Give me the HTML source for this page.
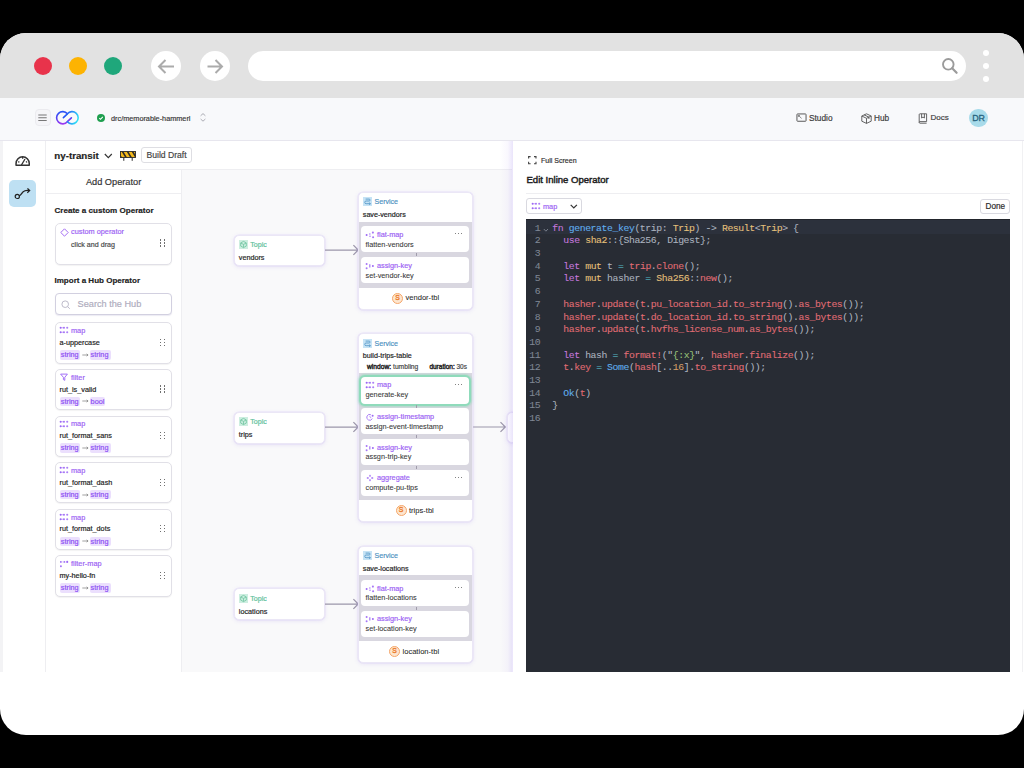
<!DOCTYPE html>
<html><head><meta charset="utf-8">
<style>
*{box-sizing:border-box;margin:0;padding:0}
html,body{width:1024px;height:768px;overflow:hidden;background:#000}
body{font-family:"Liberation Sans",sans-serif;position:relative;color:#222}
.a{position:absolute}
#frame{position:absolute;left:0;top:0;width:1024px;height:768px;background:#fff;clip-path:inset(33px 0 33px 0 round 26px);overflow:hidden}
.t{position:absolute;white-space:nowrap;line-height:1;-webkit-text-stroke:0.18px currentColor}
.code{position:absolute;font-family:"Liberation Mono",monospace;white-space:pre;color:#abb2bf;-webkit-text-stroke:0.08px currentColor}
</style></head><body>
<div id="frame">
<div class="a" style="left:0;top:33px;width:1024px;height:65px;background:#e2e2e2"></div>
<div class="a" style="left:34.00px;top:57.00px;width:18.00px;height:18.00px;border-radius:50%;background:#e8334b"></div>
<div class="a" style="left:69.00px;top:57.00px;width:18.00px;height:18.00px;border-radius:50%;background:#fdb302"></div>
<div class="a" style="left:104.00px;top:57.00px;width:18.00px;height:18.00px;border-radius:50%;background:#1fa77b"></div>
<div class="a" style="left:151.00px;top:51.00px;width:30.00px;height:30.00px;border-radius:50%;background:#fff"></div>
<div class="a" style="left:199.50px;top:51.00px;width:30.00px;height:30.00px;border-radius:50%;background:#fff"></div>
<svg class="a" style="left:151px;top:51px;overflow:visible" width="30" height="30" viewBox="0 0 30 30"><path d="M23 15.5H8.5M14.5 9L8 15.5L14.5 22" fill="none" stroke="#ababab" stroke-width="2"/></svg>
<svg class="a" style="left:199.5px;top:51px;overflow:visible" width="30" height="30" viewBox="0 0 30 30"><path d="M7.5 15.5H22M15.5 9L22 15.5L15.5 22" fill="none" stroke="#ababab" stroke-width="2"/></svg>
<div class="a" style="left:248.00px;top:51.00px;width:718.00px;height:30.00px;border-radius:15px;background:#fff"></div>
<svg class="a" style="left:940px;top:56px;overflow:visible" width="20" height="20" viewBox="0 0 20 20"><circle cx="8.3" cy="8.3" r="5.3" fill="none" stroke="#9b9b9b" stroke-width="1.9"/><path d="M12.2 12.2L16.6 16.8" stroke="#9b9b9b" stroke-width="2.2" stroke-linecap="round"/></svg>
<div class="a" style="left:983.00px;top:50.00px;width:6.00px;height:6.00px;border-radius:50%;background:#fff"></div>
<div class="a" style="left:983.00px;top:63.00px;width:6.00px;height:6.00px;border-radius:50%;background:#fff"></div>
<div class="a" style="left:983.00px;top:76.00px;width:6.00px;height:6.00px;border-radius:50%;background:#fff"></div>
<div class="a" style="left:0.00px;top:98.00px;width:1024.00px;height:43.00px;background:#f8f9fb;border-bottom:1px solid #e7e6ee"></div>
<div class="a" style="left:34.50px;top:109.30px;width:16.10px;height:16.90px;border:1px solid #ebebef;border-radius:4px;background:#f5f5f8"></div>
<svg class="a" style="left:38px;top:113px;overflow:visible" width="9" height="9" viewBox="0 0 9 9"><path d="M0.3 2H8.7M0.3 4.75H8.7M0.3 7.5H8.7" stroke="#777" stroke-width="1.05"/></svg>
<svg class="a" style="left:54px;top:109px" width="28" height="18" viewBox="54 109 28 18">
<defs><linearGradient id="lg" x1="62" y1="111" x2="63" y2="124.5" gradientUnits="userSpaceOnUse">
<stop offset="0" stop-color="#2455f6"/><stop offset="0.55" stop-color="#5a3ff2"/><stop offset="1" stop-color="#a43cf1"/></linearGradient>
<linearGradient id="lg2" x1="66" y1="113" x2="79" y2="118" gradientUnits="userSpaceOnUse"><stop offset="0" stop-color="#2453f6"/><stop offset="1" stop-color="#30e6f6"/></linearGradient></defs>
<path d="M67.37 113.83A6.1 6.1 0 1 0 67.37 121.67L71.4 117.9" fill="none" stroke="url(#lg)" stroke-width="1.6" stroke-linecap="round" stroke-linejoin="round"/>
<path d="M63.4 117.6L67.43 113.83A6.1 6.1 0 1 1 67.43 121.67" fill="none" stroke="url(#lg2)" stroke-width="1.6" stroke-linecap="round" stroke-linejoin="round"/>
</svg>
<div class="a" style="left:96.50px;top:114.00px;width:8.00px;height:8.00px;border-radius:50%;background:#1f9f4f"></div>
<svg class="a" style="left:96.5px;top:114px;overflow:visible" width="8" height="8" viewBox="0 0 8 8"><path d="M2.3 4.1L3.5 5.3L5.8 2.9" fill="none" stroke="#fff" stroke-width="1.1"/></svg>
<div class="t" style="left:111.00px;top:114.95px;font-size:7.3px;color:#3a3a3a;font-weight:400;">drc/memorable-hammerl</div>
<svg class="a" style="left:200.4px;top:113.3px;overflow:visible" width="6" height="9" viewBox="0 0 6 9"><path d="M0.6 2.8L3 0.6L5.4 2.8M0.6 6L3 8.2L5.4 6" fill="none" stroke="#a3a3ab" stroke-width="0.9"/></svg>
<svg class="a" style="left:795.6px;top:113.3px;overflow:visible" width="11" height="9" viewBox="0 0 11 9"><rect x="0.95" y="0.95" width="9.1" height="7.3" rx="0.6" fill="none" stroke="#5a5a5a" stroke-width="1"/><path d="M2.4 2.4L5.6 5.4M2.4 2.4V4M2.4 2.4H4" stroke="#777" stroke-width="0.85" fill="none"/></svg>
<div class="t" style="left:809.00px;top:113.85px;font-size:8.3px;color:#3c3c3c;font-weight:400;">Studio</div>
<svg class="a" style="left:860.5px;top:112.5px;overflow:visible" width="11" height="11" viewBox="0 0 11 11"><path d="M5.5 0.8L10.2 3V8.2L5.5 10.4L0.8 8.2V3Z M0.8 3L5.5 5.3L10.2 3 M5.5 5.3V10.4 M3.1 1.9L7.9 4.1V6" fill="none" stroke="#555" stroke-width="0.9"/></svg>
<div class="t" style="left:874.00px;top:115.08px;font-size:8.25px;color:#3c3c3c;font-weight:400;">Hub</div>
<svg class="a" style="left:918px;top:112.5px;overflow:visible" width="10" height="11" viewBox="0 0 10 11"><path d="M1.2 9.4V1.6A0.8 0.8 0 0 1 2 0.8H8.6V8.6H2A0.8 0.8 0 0 0 1.2 9.4A0.8 0.8 0 0 0 2 10.2H8.6M3.6 0.8V5L5 4L6.4 5V0.8" fill="none" stroke="#555" stroke-width="0.9"/></svg>
<div class="t" style="left:930.50px;top:113.98px;font-size:8.03px;color:#3c3c3c;font-weight:400;">Docs</div>
<div class="a" style="left:969.40px;top:108.50px;width:18.60px;height:18.60px;border-radius:50%;background:#a8dbea"></div>
<div class="t" style="left:972.20px;top:113.55px;font-size:8.9px;color:#27637e;font-weight:400;-webkit-text-stroke:0.3px #27637e">DR</div>
<div class="a" style="left:0.00px;top:141.00px;width:46.00px;height:531.00px;background:#fff;border-right:1px solid #eeeef1"></div>
<div class="a" style="left:0.00px;top:141.00px;width:2.50px;height:531.00px;background:#f3f3f5"></div>
<div class="a" style="left:46.00px;top:141.00px;width:466.00px;height:29.00px;background:#fff;border-bottom:1px solid #eeeef1"></div>
<div class="a" style="left:46.00px;top:170.00px;width:136.00px;height:502.00px;background:#fff;border-right:1px solid #eeeef1"></div>
<div class="a" style="left:46.00px;top:193.00px;width:135.00px;height:1.00px;background:#eeeef1"></div>
<div class="a" style="left:182.00px;top:170.00px;width:330.00px;height:502.00px;background:#f9f9fa"></div>
<svg class="a" style="left:14px;top:154px;overflow:visible" width="17" height="13" viewBox="0 0 17 13"><path d="M2.05 11.15V9.45A6.6 6.6 0 0 1 15.25 9.45V11.15Z" fill="none" stroke="#333" stroke-width="1.5" stroke-linejoin="round"/><path d="M7.4 11.2L11 5M8.65 3.1V4.8M4.2 7.6L5.4 8.3M13.1 7.6L11.9 8.3" stroke="#333" stroke-width="1.3" fill="none"/></svg>
<div class="a" style="left:9.20px;top:179.80px;width:26.80px;height:27.00px;border-radius:5px;background:#bee0f3"></div>
<svg class="a" style="left:14px;top:186px;overflow:visible" width="17" height="14" viewBox="0 0 17 14"><circle cx="3.3" cy="10.4" r="2.1" fill="none" stroke="#222" stroke-width="1.2"/><path d="M5.3 9.8C7 9 7.5 7.5 8.5 6.5C9.5 5.3 10 5.5 11 4.8C12.5 4 14 4.3 15.5 4.4M13.5 2.3L15.7 4.5L13.3 6.7" fill="none" stroke="#222" stroke-width="1.2"/></svg>
<div class="t" style="left:54.30px;top:150.73px;font-size:9.74px;color:#222;font-weight:700;">ny-transit</div>
<svg class="a" style="left:104px;top:152.6px;overflow:visible" width="9" height="6" viewBox="0 0 9 6"><path d="M0.8 1L4.3 4.6L7.8 1" fill="none" stroke="#333" stroke-width="1.15"/></svg>
<svg class="a" style="left:120px;top:151px" width="16" height="10" viewBox="0 0 16 10">
<defs><clipPath id="bc"><rect x="0.5" y="0.5" width="15" height="6"/></clipPath></defs>
<rect x="0.5" y="0.5" width="15" height="6" fill="#f3b81a"/>
<g clip-path="url(#bc)" stroke="#2b2b2b" stroke-width="1.6"><path d="M1 -2L7 8M6 -2L12 8M11 -2L17 8M-4 -2L2 8"/></g>
<rect x="0.5" y="0.5" width="15" height="6" fill="none" stroke="#2b2b2b" stroke-width="0.9"/>
<path d="M3.8 6.5V9.8M12.2 6.5V9.8" stroke="#2b2b2b" stroke-width="1"/></svg>
<div class="a" style="left:141.20px;top:147.30px;width:50.50px;height:15.80px;border:1px solid #dedee3;border-radius:3px;background:#fff"></div>
<div class="t" style="left:146.50px;top:150.90px;font-size:8.6px;color:#444;font-weight:400;">Build Draft</div>
<div class="t" style="left:85.90px;top:178.29px;font-size:9.22px;color:#333;font-weight:400;">Add Operator</div>
<div class="t" style="left:54.50px;top:206.66px;font-size:8.07px;color:#222;font-weight:700;">Create a custom Operator</div>
<div class="a" style="left:54.70px;top:223.30px;width:117.80px;height:42.20px;border:1px solid #e1e0e7;border-radius:5px;background:#fff;box-shadow:0 1px 1px rgba(0,0,0,.05)"></div>
<svg class="a" style="left:60px;top:227.5px;overflow:visible" width="9" height="9" viewBox="0 0 9 9"><path d="M4.5 0.8L8.2 4.5L4.5 8.2L0.8 4.5Z" fill="none" stroke="#a46ef3" stroke-width="1"/></svg>
<div class="t" style="left:71.00px;top:228.14px;font-size:7.33px;color:#9c62f4;font-weight:400;">custom operator</div>
<div class="t" style="left:71.00px;top:241.74px;font-size:7.13px;color:#4a4a4a;font-weight:400;">click and drag</div>
<div class="a" style="left:160.00px;top:239.40px;width:1.20px;height:1.20px;background:#707070"></div>
<div class="a" style="left:160.00px;top:242.40px;width:1.20px;height:1.20px;background:#707070"></div>
<div class="a" style="left:160.00px;top:245.40px;width:1.20px;height:1.20px;background:#707070"></div>
<div class="a" style="left:163.60px;top:239.40px;width:1.20px;height:1.20px;background:#707070"></div>
<div class="a" style="left:163.60px;top:242.40px;width:1.20px;height:1.20px;background:#707070"></div>
<div class="a" style="left:163.60px;top:245.40px;width:1.20px;height:1.20px;background:#707070"></div>
<div class="t" style="left:54.50px;top:276.59px;font-size:8.03px;color:#222;font-weight:700;">Import a Hub Operator</div>
<div class="a" style="left:54.70px;top:293.30px;width:117.80px;height:21.90px;border:1.3px solid #d2d0e0;border-radius:4px;background:#fff;box-shadow:0 1px 1px rgba(100,90,160,.12)"></div>
<svg class="a" style="left:61px;top:300px;overflow:visible" width="10" height="10" viewBox="0 0 10 10"><circle cx="4.2" cy="4.2" r="3.3" fill="none" stroke="#bdbbca" stroke-width="1"/><path d="M6.6 6.6L8.8 8.8" stroke="#bdbbca" stroke-width="1"/></svg>
<div class="t" style="left:77.60px;top:299.90px;font-size:9.19px;color:#aeacbd;font-weight:400;">Search the Hub</div>
<div class="a" style="left:54.70px;top:322.30px;width:117.80px;height:41.30px;border:1px solid #e1e0e7;border-radius:5px;background:#fff;box-shadow:0 1px 1px rgba(0,0,0,.05)"></div>
<svg class="a" style="left:58.00px;top:324.40px;overflow:visible" width="12" height="12" viewBox="-6.0 -6.0 12 12"><circle cx="-3.4" cy="-2.25" r="0.95" fill="#9d68f5"/><circle cx="0" cy="-2.25" r="0.95" fill="#9d68f5" opacity=".95"/><path d="M-3.4 -2.25H0" stroke="#9d68f5" stroke-width="0.6" opacity=".9"/><circle cx="3.2" cy="-2.25" r="1.05" fill="#9d68f5" opacity=".85"/><circle cx="-3.4" cy="2.25" r="0.95" fill="#9d68f5"/><circle cx="0" cy="2.25" r="0.95" fill="#9d68f5" opacity=".95"/><path d="M-3.4 2.25H0" stroke="#9d68f5" stroke-width="0.6" opacity=".9"/><circle cx="3.2" cy="2.25" r="1.05" fill="#9d68f5" opacity=".85"/></svg>
<div class="t" style="left:71.00px;top:327.13px;font-size:7.33px;color:#9c62f4;font-weight:400;">map</div>
<div class="t" style="left:59.50px;top:338.88px;font-size:7.25px;color:#222;font-weight:400;">a-uppercase</div>
<div class="a" style="left:160.00px;top:338.70px;width:1.20px;height:1.20px;background:#707070"></div>
<div class="a" style="left:160.00px;top:341.70px;width:1.20px;height:1.20px;background:#707070"></div>
<div class="a" style="left:160.00px;top:344.70px;width:1.20px;height:1.20px;background:#707070"></div>
<div class="a" style="left:163.60px;top:338.70px;width:1.20px;height:1.20px;background:#707070"></div>
<div class="a" style="left:163.60px;top:341.70px;width:1.20px;height:1.20px;background:#707070"></div>
<div class="a" style="left:163.60px;top:344.70px;width:1.20px;height:1.20px;background:#707070"></div>
<div class="a" style="left:60.00px;top:350.00px;width:20.20px;height:9.60px;background:#ebdffd;border-radius:2px"></div>
<div class="t" style="left:60.80px;top:351.15px;font-size:7.3px;color:#8b4ef4;font-weight:400;">string</div>
<svg class="a" style="left:82px;top:352.80px" width="7" height="4" viewBox="0 0 7 4"><path d="M0.3 2H6M4.6 0.9L6.1 2L4.6 3.1" fill="none" stroke="#7a7a7a" stroke-width="0.7"/></svg>
<div class="a" style="left:89.80px;top:350.00px;width:20.80px;height:9.60px;background:#ebdffd;border-radius:2px"></div>
<div class="t" style="left:90.60px;top:351.15px;font-size:7.3px;color:#8b4ef4;font-weight:400;">string</div>
<div class="a" style="left:54.70px;top:368.93px;width:117.80px;height:41.30px;border:1px solid #e1e0e7;border-radius:5px;background:#fff;box-shadow:0 1px 1px rgba(0,0,0,.05)"></div>
<svg class="a" style="left:58.00px;top:371.03px;overflow:visible" width="12" height="12" viewBox="-6.0 -6.0 12 12"><path d="M-3.4 -2.9H3.4L0.8 0.3V3.3L-0.6 2.6V0.3Z" fill="none" stroke="#9d68f5" stroke-width="0.95" stroke-linejoin="round"/></svg>
<div class="t" style="left:71.00px;top:373.76px;font-size:7.33px;color:#9c62f4;font-weight:400;">filter</div>
<div class="t" style="left:59.50px;top:385.50px;font-size:7.25px;color:#222;font-weight:400;">rut_is_valid</div>
<div class="a" style="left:160.00px;top:385.33px;width:1.20px;height:1.20px;background:#707070"></div>
<div class="a" style="left:160.00px;top:388.33px;width:1.20px;height:1.20px;background:#707070"></div>
<div class="a" style="left:160.00px;top:391.33px;width:1.20px;height:1.20px;background:#707070"></div>
<div class="a" style="left:163.60px;top:385.33px;width:1.20px;height:1.20px;background:#707070"></div>
<div class="a" style="left:163.60px;top:388.33px;width:1.20px;height:1.20px;background:#707070"></div>
<div class="a" style="left:163.60px;top:391.33px;width:1.20px;height:1.20px;background:#707070"></div>
<div class="a" style="left:60.00px;top:396.63px;width:20.20px;height:9.60px;background:#ebdffd;border-radius:2px"></div>
<div class="t" style="left:60.80px;top:397.78px;font-size:7.3px;color:#8b4ef4;font-weight:400;">string</div>
<svg class="a" style="left:82px;top:399.43px" width="7" height="4" viewBox="0 0 7 4"><path d="M0.3 2H6M4.6 0.9L6.1 2L4.6 3.1" fill="none" stroke="#7a7a7a" stroke-width="0.7"/></svg>
<div class="a" style="left:89.80px;top:396.63px;width:15.20px;height:9.60px;background:#ebdffd;border-radius:2px"></div>
<div class="t" style="left:90.60px;top:397.78px;font-size:7.3px;color:#8b4ef4;font-weight:400;">bool</div>
<div class="a" style="left:54.70px;top:415.56px;width:117.80px;height:41.30px;border:1px solid #e1e0e7;border-radius:5px;background:#fff;box-shadow:0 1px 1px rgba(0,0,0,.05)"></div>
<svg class="a" style="left:58.00px;top:417.66px;overflow:visible" width="12" height="12" viewBox="-6.0 -6.0 12 12"><circle cx="-3.4" cy="-2.25" r="0.95" fill="#9d68f5"/><circle cx="0" cy="-2.25" r="0.95" fill="#9d68f5" opacity=".95"/><path d="M-3.4 -2.25H0" stroke="#9d68f5" stroke-width="0.6" opacity=".9"/><circle cx="3.2" cy="-2.25" r="1.05" fill="#9d68f5" opacity=".85"/><circle cx="-3.4" cy="2.25" r="0.95" fill="#9d68f5"/><circle cx="0" cy="2.25" r="0.95" fill="#9d68f5" opacity=".95"/><path d="M-3.4 2.25H0" stroke="#9d68f5" stroke-width="0.6" opacity=".9"/><circle cx="3.2" cy="2.25" r="1.05" fill="#9d68f5" opacity=".85"/></svg>
<div class="t" style="left:71.00px;top:420.39px;font-size:7.33px;color:#9c62f4;font-weight:400;">map</div>
<div class="t" style="left:59.50px;top:432.13px;font-size:7.25px;color:#222;font-weight:400;">rut_format_sans</div>
<div class="a" style="left:160.00px;top:431.96px;width:1.20px;height:1.20px;background:#707070"></div>
<div class="a" style="left:160.00px;top:434.96px;width:1.20px;height:1.20px;background:#707070"></div>
<div class="a" style="left:160.00px;top:437.96px;width:1.20px;height:1.20px;background:#707070"></div>
<div class="a" style="left:163.60px;top:431.96px;width:1.20px;height:1.20px;background:#707070"></div>
<div class="a" style="left:163.60px;top:434.96px;width:1.20px;height:1.20px;background:#707070"></div>
<div class="a" style="left:163.60px;top:437.96px;width:1.20px;height:1.20px;background:#707070"></div>
<div class="a" style="left:60.00px;top:443.26px;width:20.20px;height:9.60px;background:#ebdffd;border-radius:2px"></div>
<div class="t" style="left:60.80px;top:444.41px;font-size:7.3px;color:#8b4ef4;font-weight:400;">string</div>
<svg class="a" style="left:82px;top:446.06px" width="7" height="4" viewBox="0 0 7 4"><path d="M0.3 2H6M4.6 0.9L6.1 2L4.6 3.1" fill="none" stroke="#7a7a7a" stroke-width="0.7"/></svg>
<div class="a" style="left:89.80px;top:443.26px;width:20.80px;height:9.60px;background:#ebdffd;border-radius:2px"></div>
<div class="t" style="left:90.60px;top:444.41px;font-size:7.3px;color:#8b4ef4;font-weight:400;">string</div>
<div class="a" style="left:54.70px;top:462.19px;width:117.80px;height:41.30px;border:1px solid #e1e0e7;border-radius:5px;background:#fff;box-shadow:0 1px 1px rgba(0,0,0,.05)"></div>
<svg class="a" style="left:58.00px;top:464.29px;overflow:visible" width="12" height="12" viewBox="-6.0 -6.0 12 12"><circle cx="-3.4" cy="-2.25" r="0.95" fill="#9d68f5"/><circle cx="0" cy="-2.25" r="0.95" fill="#9d68f5" opacity=".95"/><path d="M-3.4 -2.25H0" stroke="#9d68f5" stroke-width="0.6" opacity=".9"/><circle cx="3.2" cy="-2.25" r="1.05" fill="#9d68f5" opacity=".85"/><circle cx="-3.4" cy="2.25" r="0.95" fill="#9d68f5"/><circle cx="0" cy="2.25" r="0.95" fill="#9d68f5" opacity=".95"/><path d="M-3.4 2.25H0" stroke="#9d68f5" stroke-width="0.6" opacity=".9"/><circle cx="3.2" cy="2.25" r="1.05" fill="#9d68f5" opacity=".85"/></svg>
<div class="t" style="left:71.00px;top:467.03px;font-size:7.33px;color:#9c62f4;font-weight:400;">map</div>
<div class="t" style="left:59.50px;top:478.77px;font-size:7.25px;color:#222;font-weight:400;">rut_format_dash</div>
<div class="a" style="left:160.00px;top:478.59px;width:1.20px;height:1.20px;background:#707070"></div>
<div class="a" style="left:160.00px;top:481.59px;width:1.20px;height:1.20px;background:#707070"></div>
<div class="a" style="left:160.00px;top:484.59px;width:1.20px;height:1.20px;background:#707070"></div>
<div class="a" style="left:163.60px;top:478.59px;width:1.20px;height:1.20px;background:#707070"></div>
<div class="a" style="left:163.60px;top:481.59px;width:1.20px;height:1.20px;background:#707070"></div>
<div class="a" style="left:163.60px;top:484.59px;width:1.20px;height:1.20px;background:#707070"></div>
<div class="a" style="left:60.00px;top:489.89px;width:20.20px;height:9.60px;background:#ebdffd;border-radius:2px"></div>
<div class="t" style="left:60.80px;top:491.04px;font-size:7.3px;color:#8b4ef4;font-weight:400;">string</div>
<svg class="a" style="left:82px;top:492.69px" width="7" height="4" viewBox="0 0 7 4"><path d="M0.3 2H6M4.6 0.9L6.1 2L4.6 3.1" fill="none" stroke="#7a7a7a" stroke-width="0.7"/></svg>
<div class="a" style="left:89.80px;top:489.89px;width:20.80px;height:9.60px;background:#ebdffd;border-radius:2px"></div>
<div class="t" style="left:90.60px;top:491.04px;font-size:7.3px;color:#8b4ef4;font-weight:400;">string</div>
<div class="a" style="left:54.70px;top:508.82px;width:117.80px;height:41.30px;border:1px solid #e1e0e7;border-radius:5px;background:#fff;box-shadow:0 1px 1px rgba(0,0,0,.05)"></div>
<svg class="a" style="left:58.00px;top:510.92px;overflow:visible" width="12" height="12" viewBox="-6.0 -6.0 12 12"><circle cx="-3.4" cy="-2.25" r="0.95" fill="#9d68f5"/><circle cx="0" cy="-2.25" r="0.95" fill="#9d68f5" opacity=".95"/><path d="M-3.4 -2.25H0" stroke="#9d68f5" stroke-width="0.6" opacity=".9"/><circle cx="3.2" cy="-2.25" r="1.05" fill="#9d68f5" opacity=".85"/><circle cx="-3.4" cy="2.25" r="0.95" fill="#9d68f5"/><circle cx="0" cy="2.25" r="0.95" fill="#9d68f5" opacity=".95"/><path d="M-3.4 2.25H0" stroke="#9d68f5" stroke-width="0.6" opacity=".9"/><circle cx="3.2" cy="2.25" r="1.05" fill="#9d68f5" opacity=".85"/></svg>
<div class="t" style="left:71.00px;top:513.66px;font-size:7.33px;color:#9c62f4;font-weight:400;">map</div>
<div class="t" style="left:59.50px;top:525.40px;font-size:7.25px;color:#222;font-weight:400;">rut_format_dots</div>
<div class="a" style="left:160.00px;top:525.22px;width:1.20px;height:1.20px;background:#707070"></div>
<div class="a" style="left:160.00px;top:528.22px;width:1.20px;height:1.20px;background:#707070"></div>
<div class="a" style="left:160.00px;top:531.22px;width:1.20px;height:1.20px;background:#707070"></div>
<div class="a" style="left:163.60px;top:525.22px;width:1.20px;height:1.20px;background:#707070"></div>
<div class="a" style="left:163.60px;top:528.22px;width:1.20px;height:1.20px;background:#707070"></div>
<div class="a" style="left:163.60px;top:531.22px;width:1.20px;height:1.20px;background:#707070"></div>
<div class="a" style="left:60.00px;top:536.52px;width:20.20px;height:9.60px;background:#ebdffd;border-radius:2px"></div>
<div class="t" style="left:60.80px;top:537.67px;font-size:7.3px;color:#8b4ef4;font-weight:400;">string</div>
<svg class="a" style="left:82px;top:539.32px" width="7" height="4" viewBox="0 0 7 4"><path d="M0.3 2H6M4.6 0.9L6.1 2L4.6 3.1" fill="none" stroke="#7a7a7a" stroke-width="0.7"/></svg>
<div class="a" style="left:89.80px;top:536.52px;width:20.80px;height:9.60px;background:#ebdffd;border-radius:2px"></div>
<div class="t" style="left:90.60px;top:537.67px;font-size:7.3px;color:#8b4ef4;font-weight:400;">string</div>
<div class="a" style="left:54.70px;top:555.45px;width:117.80px;height:41.30px;border:1px solid #e1e0e7;border-radius:5px;background:#fff;box-shadow:0 1px 1px rgba(0,0,0,.05)"></div>
<svg class="a" style="left:58.00px;top:557.55px;overflow:visible" width="12" height="12" viewBox="-6.0 -6.0 12 12"><circle cx="-3.2" cy="-2.1" r="0.9" fill="#9d68f5" opacity=".95"/><circle cx="0.4" cy="-2.1" r="0.9" fill="#9d68f5" opacity=".95"/><path d="M-3.2 -2.1H0.4" stroke="#9d68f5" stroke-width="0.5" opacity=".5"/><circle cx="3.2" cy="-2.1" r="1.05" fill="#9d68f5"/><circle cx="-3.1" cy="2.3" r="0.95" fill="#9d68f5" opacity=".95"/></svg>
<div class="t" style="left:71.00px;top:560.29px;font-size:7.33px;color:#9c62f4;font-weight:400;">filter-map</div>
<div class="t" style="left:59.50px;top:572.03px;font-size:7.25px;color:#222;font-weight:400;">my-hello-fn</div>
<div class="a" style="left:160.00px;top:571.85px;width:1.20px;height:1.20px;background:#707070"></div>
<div class="a" style="left:160.00px;top:574.85px;width:1.20px;height:1.20px;background:#707070"></div>
<div class="a" style="left:160.00px;top:577.85px;width:1.20px;height:1.20px;background:#707070"></div>
<div class="a" style="left:163.60px;top:571.85px;width:1.20px;height:1.20px;background:#707070"></div>
<div class="a" style="left:163.60px;top:574.85px;width:1.20px;height:1.20px;background:#707070"></div>
<div class="a" style="left:163.60px;top:577.85px;width:1.20px;height:1.20px;background:#707070"></div>
<div class="a" style="left:60.00px;top:583.15px;width:20.20px;height:9.60px;background:#ebdffd;border-radius:2px"></div>
<div class="t" style="left:60.80px;top:584.30px;font-size:7.3px;color:#8b4ef4;font-weight:400;">string</div>
<svg class="a" style="left:82px;top:585.95px" width="7" height="4" viewBox="0 0 7 4"><path d="M0.3 2H6M4.6 0.9L6.1 2L4.6 3.1" fill="none" stroke="#7a7a7a" stroke-width="0.7"/></svg>
<div class="a" style="left:89.80px;top:583.15px;width:20.80px;height:9.60px;background:#ebdffd;border-radius:2px"></div>
<div class="t" style="left:90.60px;top:584.30px;font-size:7.3px;color:#8b4ef4;font-weight:400;">string</div>
<div class="a" style="left:234.10px;top:234.50px;width:90.70px;height:31.80px;border:1px solid #ebe7f6;border-radius:5px;background:#fff;box-shadow:0 0 0 0.5px rgba(205,190,245,.3),0 1px 4px rgba(150,120,230,.18)"></div>
<svg class="a" style="left:239px;top:239.90px" width="9" height="9" viewBox="0 0 9 9"><rect width="9" height="9" fill="#cdeee0"/><path d="M4.5 1.4L7.3 2.9V6.1L4.5 7.6L1.7 6.1V2.9Z M1.9 3.1L4.5 4.4L7.1 3.1 M4.5 4.4V7.5" fill="none" stroke="#74c6a3" stroke-width="0.85" stroke-linejoin="round"/></svg>
<div class="t" style="left:250.30px;top:241.74px;font-size:7.12px;color:#5cc09a;font-weight:400;">Topic</div>
<div class="t" style="left:238.80px;top:254.09px;font-size:7.22px;color:#1e1e1e;font-weight:400;">vendors</div>
<svg class="a" style="left:324.5px;top:244.30px;overflow:visible" width="34.0" height="12" viewBox="0 0 34.0 12"><path d="M0 6H33.2M28.4 1.1L33.2 6L28.4 10.9" fill="none" stroke="#9c97aa" stroke-width="1.25"/></svg>
<div class="a" style="left:234.10px;top:411.80px;width:90.70px;height:31.80px;border:1px solid #ebe7f6;border-radius:5px;background:#fff;box-shadow:0 0 0 0.5px rgba(205,190,245,.3),0 1px 4px rgba(150,120,230,.18)"></div>
<svg class="a" style="left:239px;top:417.20px" width="9" height="9" viewBox="0 0 9 9"><rect width="9" height="9" fill="#cdeee0"/><path d="M4.5 1.4L7.3 2.9V6.1L4.5 7.6L1.7 6.1V2.9Z M1.9 3.1L4.5 4.4L7.1 3.1 M4.5 4.4V7.5" fill="none" stroke="#74c6a3" stroke-width="0.85" stroke-linejoin="round"/></svg>
<div class="t" style="left:250.30px;top:419.04px;font-size:7.12px;color:#5cc09a;font-weight:400;">Topic</div>
<div class="t" style="left:238.80px;top:431.39px;font-size:7.22px;color:#1e1e1e;font-weight:400;">trips</div>
<svg class="a" style="left:324.5px;top:420.90px;overflow:visible" width="34.0" height="12" viewBox="0 0 34.0 12"><path d="M0 6H33.2M28.4 1.1L33.2 6L28.4 10.9" fill="none" stroke="#9c97aa" stroke-width="1.25"/></svg>
<div class="a" style="left:234.10px;top:588.30px;width:90.70px;height:31.80px;border:1px solid #ebe7f6;border-radius:5px;background:#fff;box-shadow:0 0 0 0.5px rgba(205,190,245,.3),0 1px 4px rgba(150,120,230,.18)"></div>
<svg class="a" style="left:239px;top:593.70px" width="9" height="9" viewBox="0 0 9 9"><rect width="9" height="9" fill="#cdeee0"/><path d="M4.5 1.4L7.3 2.9V6.1L4.5 7.6L1.7 6.1V2.9Z M1.9 3.1L4.5 4.4L7.1 3.1 M4.5 4.4V7.5" fill="none" stroke="#74c6a3" stroke-width="0.85" stroke-linejoin="round"/></svg>
<div class="t" style="left:250.30px;top:595.54px;font-size:7.12px;color:#5cc09a;font-weight:400;">Topic</div>
<div class="t" style="left:238.80px;top:607.89px;font-size:7.22px;color:#1e1e1e;font-weight:400;">locations</div>
<svg class="a" style="left:324.5px;top:597.50px;overflow:visible" width="34.0" height="12" viewBox="0 0 34.0 12"><path d="M0 6H33.2M28.4 1.1L33.2 6L28.4 10.9" fill="none" stroke="#9c97aa" stroke-width="1.25"/></svg>
<svg class="a" style="left:472.4px;top:420.70px;overflow:visible" width="34.10000000000002" height="12" viewBox="0 0 34.10000000000002 12"><path d="M0 6H33.300000000000026M28.50000000000002 1.1L33.300000000000026 6L28.50000000000002 10.9" fill="none" stroke="#9c97aa" stroke-width="1.25"/></svg>
<div class="a" style="left:507.40px;top:411.60px;width:22.60px;height:31.40px;border:1px solid #ebe7f6;border-radius:5px;background:#fff;box-shadow:0 0 0 0.5px rgba(205,190,245,.3),0 1px 4px rgba(150,120,230,.18)"></div>
<div class="a" style="left:358.30px;top:191.80px;width:114.30px;height:118.00px;border:1px solid #ebe7f6;border-radius:5px;background:#fff;box-shadow:0 0 0 0.5px rgba(205,190,245,.3),0 1px 4px rgba(150,120,230,.18)"></div>
<svg class="a" style="left:363px;top:197.40px" width="9" height="9" viewBox="0 0 9 9"><rect width="9" height="9" fill="#c6e3f5"/><path d="M3 2.1H6.1A0.95 0.95 0 0 1 6.1 4H3.1A1.35 1.35 0 0 0 3.1 6.7H7.3M6.4 5.9L7.3 6.7L6.4 7.5" fill="none" stroke="#5a9bcb" stroke-width="0.9" stroke-linecap="round"/></svg>
<div class="t" style="left:374.60px;top:198.49px;font-size:7.03px;color:#4f93c2;font-weight:400;">Service</div>
<div class="t" style="left:362.80px;top:212.02px;font-size:7.17px;color:#1e1e1e;font-weight:400;">save-vendors</div>
<div class="a" style="left:358.80px;top:222.30px;width:113.30px;height:65.70px;background:#d9d7e0"></div>
<div class="a" style="left:361.10px;top:226.10px;width:108.40px;height:26.40px;border-radius:4px;background:#fff"></div>
<svg class="a" style="left:364.30px;top:228.70px;overflow:visible" width="12" height="12" viewBox="-6.0 -6.0 12 12"><circle cx="-3.4" cy="0" r="1" fill="#9d68f5"/><circle cx="-0.1" cy="-1.1" r="0.75" fill="#9d68f5" opacity=".9"/><circle cx="0" cy="1.2" r="0.75" fill="#9d68f5" opacity=".9"/><circle cx="2.9" cy="-2.4" r="1.05" fill="#9d68f5" opacity=".9"/><circle cx="3.1" cy="2.3" r="1.05" fill="#9d68f5" opacity=".9"/></svg>
<div class="t" style="left:377.00px;top:230.85px;font-size:7.3px;color:#9c62f4;font-weight:400;">flat-map</div>
<div class="t" style="left:365.50px;top:240.55px;font-size:7.3px;color:#3a3a3a;font-weight:400;-webkit-text-stroke:0.08px #3a3a3a">flatten-vendors</div>
<div class="a" style="left:454.90px;top:233.10px;width:1.30px;height:1.30px;border-radius:50%;background:#5a5a5a"></div>
<div class="a" style="left:457.75px;top:233.10px;width:1.30px;height:1.30px;border-radius:50%;background:#5a5a5a"></div>
<div class="a" style="left:460.60px;top:233.10px;width:1.30px;height:1.30px;border-radius:50%;background:#5a5a5a"></div>
<div class="a" style="left:415.60px;top:253.30px;width:1.00px;height:3.00px;background:#a09cab"></div>
<div class="a" style="left:361.10px;top:257.10px;width:108.40px;height:25.90px;border-radius:4px;background:#fff"></div>
<svg class="a" style="left:364.30px;top:259.70px;overflow:visible" width="12" height="12" viewBox="-6.0 -6.0 12 12"><circle cx="-3.4" cy="-2" r="1" fill="#9d68f5" opacity=".9"/><circle cx="-3.4" cy="2.3" r="1" fill="#9d68f5" opacity=".9"/><path d="M-0.2 -1.7V1.5" stroke="#9d68f5" stroke-width="1.2" opacity=".9"/><circle cx="2.9" cy="0" r="1" fill="#9d68f5"/></svg>
<div class="t" style="left:377.00px;top:261.85px;font-size:7.3px;color:#9c62f4;font-weight:400;">assign-key</div>
<div class="t" style="left:365.50px;top:271.55px;font-size:7.3px;color:#3a3a3a;font-weight:400;-webkit-text-stroke:0.08px #3a3a3a">set-vendor-key</div>
<div class="a" style="left:392.00px;top:292.50px;width:11.00px;height:11.00px;border-radius:50%;background:#fde6cf;border:1px solid #f5a66a"></div>
<div class="t" style="left:395.30px;top:294.80px;font-size:6.8px;color:#ec7a2a;font-weight:400;-webkit-text-stroke:0.35px #ec7a2a">S</div>
<div class="t" style="left:405.50px;top:294.21px;font-size:7.57px;color:#2a2a2a;font-weight:400;-webkit-text-stroke:0.06px #2a2a2a">vendor-tbl</div>
<div class="a" style="left:358.30px;top:332.90px;width:114.30px;height:189.50px;border:1px solid #ebe7f6;border-radius:5px;background:#fff;box-shadow:0 0 0 0.5px rgba(205,190,245,.3),0 1px 4px rgba(150,120,230,.18)"></div>
<svg class="a" style="left:363px;top:338.50px" width="9" height="9" viewBox="0 0 9 9"><rect width="9" height="9" fill="#c6e3f5"/><path d="M3 2.1H6.1A0.95 0.95 0 0 1 6.1 4H3.1A1.35 1.35 0 0 0 3.1 6.7H7.3M6.4 5.9L7.3 6.7L6.4 7.5" fill="none" stroke="#5a9bcb" stroke-width="0.9" stroke-linecap="round"/></svg>
<div class="t" style="left:374.60px;top:339.58px;font-size:7.03px;color:#4f93c2;font-weight:400;">Service</div>
<div class="t" style="left:362.80px;top:353.12px;font-size:7.17px;color:#1e1e1e;font-weight:400;">build-trips-table</div>
<div class="t" style="left:367px;top:364.20px;font-size:6.7px;color:#222"><span style="-webkit-text-stroke:0.4px #222">window:</span> <span style="color:#444">tumbling</span></div>
<div class="t" style="left:429.4px;top:364.20px;font-size:6.5px;color:#222"><span style="-webkit-text-stroke:0.4px #222">duration:</span> <span style="color:#444">30s</span></div>
<div class="a" style="left:358.80px;top:373.30px;width:113.30px;height:127.20px;background:#d9d7e0"></div>
<div class="a" style="left:361.10px;top:376.60px;width:108.40px;height:27.60px;border-radius:4px;background:#fff;box-shadow:0 0 0 2px #8fdbbb,0 0 2px 2.5px rgba(143,219,187,.6)"></div>
<svg class="a" style="left:364.30px;top:379.20px;overflow:visible" width="12" height="12" viewBox="-6.0 -6.0 12 12"><circle cx="-3.4" cy="-2.25" r="0.95" fill="#9d68f5"/><circle cx="0" cy="-2.25" r="0.95" fill="#9d68f5" opacity=".95"/><path d="M-3.4 -2.25H0" stroke="#9d68f5" stroke-width="0.6" opacity=".9"/><circle cx="3.2" cy="-2.25" r="1.05" fill="#9d68f5" opacity=".85"/><circle cx="-3.4" cy="2.25" r="0.95" fill="#9d68f5"/><circle cx="0" cy="2.25" r="0.95" fill="#9d68f5" opacity=".95"/><path d="M-3.4 2.25H0" stroke="#9d68f5" stroke-width="0.6" opacity=".9"/><circle cx="3.2" cy="2.25" r="1.05" fill="#9d68f5" opacity=".85"/></svg>
<div class="t" style="left:377.00px;top:381.35px;font-size:7.3px;color:#9c62f4;font-weight:400;">map</div>
<div class="t" style="left:365.50px;top:391.05px;font-size:7.3px;color:#3a3a3a;font-weight:400;-webkit-text-stroke:0.08px #3a3a3a">generate-key</div>
<div class="a" style="left:454.90px;top:383.60px;width:1.30px;height:1.30px;border-radius:50%;background:#5a5a5a"></div>
<div class="a" style="left:457.75px;top:383.60px;width:1.30px;height:1.30px;border-radius:50%;background:#5a5a5a"></div>
<div class="a" style="left:460.60px;top:383.60px;width:1.30px;height:1.30px;border-radius:50%;background:#5a5a5a"></div>
<div class="a" style="left:415.60px;top:405.00px;width:1.00px;height:2.50px;background:#a09cab"></div>
<div class="a" style="left:361.10px;top:408.30px;width:108.40px;height:26.00px;border-radius:4px;background:#fff"></div>
<svg class="a" style="left:364.30px;top:410.90px;overflow:visible" width="12" height="12" viewBox="-6.0 -6.0 12 12"><path d="M2.3 1.6A2.9 2.9 0 1 1 0.9 -2.3" fill="none" stroke="#9d68f5" stroke-width="0.95" opacity=".9"/><path d="M-0.3 -1.1L0.4 0.6L1.3 0.9" fill="none" stroke="#9d68f5" stroke-width="0.8" opacity=".85"/><circle cx="2.6" cy="-1.2" r="1" fill="#9d68f5"/></svg>
<div class="t" style="left:377.00px;top:413.05px;font-size:7.3px;color:#9c62f4;font-weight:400;">assign-timestamp</div>
<div class="t" style="left:365.50px;top:422.75px;font-size:7.3px;color:#3a3a3a;font-weight:400;-webkit-text-stroke:0.08px #3a3a3a">assign-event-timestamp</div>
<div class="a" style="left:415.60px;top:435.10px;width:1.00px;height:3.10px;background:#a09cab"></div>
<div class="a" style="left:361.10px;top:439.00px;width:108.40px;height:26.00px;border-radius:4px;background:#fff"></div>
<svg class="a" style="left:364.30px;top:441.60px;overflow:visible" width="12" height="12" viewBox="-6.0 -6.0 12 12"><circle cx="-3.4" cy="-2" r="1" fill="#9d68f5" opacity=".9"/><circle cx="-3.4" cy="2.3" r="1" fill="#9d68f5" opacity=".9"/><path d="M-0.2 -1.7V1.5" stroke="#9d68f5" stroke-width="1.2" opacity=".9"/><circle cx="2.9" cy="0" r="1" fill="#9d68f5"/></svg>
<div class="t" style="left:377.00px;top:443.75px;font-size:7.3px;color:#9c62f4;font-weight:400;">assign-key</div>
<div class="t" style="left:365.50px;top:453.45px;font-size:7.3px;color:#3a3a3a;font-weight:400;-webkit-text-stroke:0.08px #3a3a3a">assgn-trip-key</div>
<div class="a" style="left:415.60px;top:465.80px;width:1.00px;height:3.00px;background:#a09cab"></div>
<div class="a" style="left:361.10px;top:469.60px;width:108.40px;height:26.00px;border-radius:4px;background:#fff"></div>
<svg class="a" style="left:364.30px;top:472.20px;overflow:visible" width="12" height="12" viewBox="-6.0 -6.0 12 12"><path d="M0 -3.6L1 -2.1L0 -0.9L-1 -2.1Z M0 3.6L1 2.1L0 0.9L-1 2.1Z M-3.6 0L-2.1 -1L-0.9 0L-2.1 1Z M3.6 0L2.1 -1L0.9 0L2.1 1Z" fill="#9d68f5" opacity=".95"/></svg>
<div class="t" style="left:377.00px;top:474.35px;font-size:7.3px;color:#9c62f4;font-weight:400;">aggregate</div>
<div class="t" style="left:365.50px;top:484.05px;font-size:7.3px;color:#3a3a3a;font-weight:400;-webkit-text-stroke:0.08px #3a3a3a">compute-pu-tips</div>
<div class="a" style="left:454.90px;top:476.60px;width:1.30px;height:1.30px;border-radius:50%;background:#5a5a5a"></div>
<div class="a" style="left:457.75px;top:476.60px;width:1.30px;height:1.30px;border-radius:50%;background:#5a5a5a"></div>
<div class="a" style="left:460.60px;top:476.60px;width:1.30px;height:1.30px;border-radius:50%;background:#5a5a5a"></div>
<div class="a" style="left:395.50px;top:505.10px;width:11.00px;height:11.00px;border-radius:50%;background:#fde6cf;border:1px solid #f5a66a"></div>
<div class="t" style="left:398.80px;top:507.40px;font-size:6.8px;color:#ec7a2a;font-weight:400;-webkit-text-stroke:0.35px #ec7a2a">S</div>
<div class="t" style="left:409.00px;top:506.81px;font-size:7.57px;color:#2a2a2a;font-weight:400;-webkit-text-stroke:0.06px #2a2a2a">trips-tbl</div>
<div class="a" style="left:358.30px;top:545.70px;width:114.30px;height:117.20px;border:1px solid #ebe7f6;border-radius:5px;background:#fff;box-shadow:0 0 0 0.5px rgba(205,190,245,.3),0 1px 4px rgba(150,120,230,.18)"></div>
<svg class="a" style="left:363px;top:551.30px" width="9" height="9" viewBox="0 0 9 9"><rect width="9" height="9" fill="#c6e3f5"/><path d="M3 2.1H6.1A0.95 0.95 0 0 1 6.1 4H3.1A1.35 1.35 0 0 0 3.1 6.7H7.3M6.4 5.9L7.3 6.7L6.4 7.5" fill="none" stroke="#5a9bcb" stroke-width="0.9" stroke-linecap="round"/></svg>
<div class="t" style="left:374.60px;top:552.39px;font-size:7.03px;color:#4f93c2;font-weight:400;">Service</div>
<div class="t" style="left:362.80px;top:565.91px;font-size:7.17px;color:#1e1e1e;font-weight:400;">save-locations</div>
<div class="a" style="left:358.80px;top:575.40px;width:113.30px;height:66.10px;background:#d9d7e0"></div>
<div class="a" style="left:361.10px;top:580.00px;width:108.40px;height:25.90px;border-radius:4px;background:#fff"></div>
<svg class="a" style="left:364.30px;top:582.60px;overflow:visible" width="12" height="12" viewBox="-6.0 -6.0 12 12"><circle cx="-3.4" cy="0" r="1" fill="#9d68f5"/><circle cx="-0.1" cy="-1.1" r="0.75" fill="#9d68f5" opacity=".9"/><circle cx="0" cy="1.2" r="0.75" fill="#9d68f5" opacity=".9"/><circle cx="2.9" cy="-2.4" r="1.05" fill="#9d68f5" opacity=".9"/><circle cx="3.1" cy="2.3" r="1.05" fill="#9d68f5" opacity=".9"/></svg>
<div class="t" style="left:377.00px;top:584.75px;font-size:7.3px;color:#9c62f4;font-weight:400;">flat-map</div>
<div class="t" style="left:365.50px;top:594.45px;font-size:7.3px;color:#3a3a3a;font-weight:400;-webkit-text-stroke:0.08px #3a3a3a">flatten-locations</div>
<div class="a" style="left:454.90px;top:587.00px;width:1.30px;height:1.30px;border-radius:50%;background:#5a5a5a"></div>
<div class="a" style="left:457.75px;top:587.00px;width:1.30px;height:1.30px;border-radius:50%;background:#5a5a5a"></div>
<div class="a" style="left:460.60px;top:587.00px;width:1.30px;height:1.30px;border-radius:50%;background:#5a5a5a"></div>
<div class="a" style="left:415.60px;top:606.70px;width:1.00px;height:3.10px;background:#a09cab"></div>
<div class="a" style="left:361.10px;top:610.60px;width:108.40px;height:26.10px;border-radius:4px;background:#fff"></div>
<svg class="a" style="left:364.30px;top:613.20px;overflow:visible" width="12" height="12" viewBox="-6.0 -6.0 12 12"><circle cx="-3.4" cy="-2" r="1" fill="#9d68f5" opacity=".9"/><circle cx="-3.4" cy="2.3" r="1" fill="#9d68f5" opacity=".9"/><path d="M-0.2 -1.7V1.5" stroke="#9d68f5" stroke-width="1.2" opacity=".9"/><circle cx="2.9" cy="0" r="1" fill="#9d68f5"/></svg>
<div class="t" style="left:377.00px;top:615.35px;font-size:7.3px;color:#9c62f4;font-weight:400;">assign-key</div>
<div class="t" style="left:365.50px;top:625.05px;font-size:7.3px;color:#3a3a3a;font-weight:400;-webkit-text-stroke:0.08px #3a3a3a">set-location-key</div>
<div class="a" style="left:389.00px;top:646.10px;width:11.00px;height:11.00px;border-radius:50%;background:#fde6cf;border:1px solid #f5a66a"></div>
<div class="t" style="left:392.30px;top:648.40px;font-size:6.8px;color:#ec7a2a;font-weight:400;-webkit-text-stroke:0.35px #ec7a2a">S</div>
<div class="t" style="left:402.50px;top:647.82px;font-size:7.57px;color:#2a2a2a;font-weight:400;-webkit-text-stroke:0.06px #2a2a2a">location-tbl</div>
<div class="a" style="left:500.00px;top:141.00px;width:12.50px;height:531.00px;background:linear-gradient(to right,rgba(160,130,240,0),rgba(160,130,240,.06) 60%,rgba(150,120,235,.2))"></div>
<div class="a" style="left:512.50px;top:141.00px;width:511.50px;height:531.00px;background:#fff"></div>
<div class="a" style="left:1022.00px;top:141.00px;width:1.00px;height:531.00px;background:#f1f1f3"></div>
<svg class="a" style="left:527.5px;top:155.7px;overflow:visible" width="9" height="8.4" viewBox="0 0 9 8.4"><path d="M0.6 2.6V0.6H2.6M6.0 0.6H8.0V2.6M8.0 5.8V7.8H6.0M2.6 7.8H0.6V5.8" fill="none" stroke="#444" stroke-width="1.1"/></svg>
<div class="t" style="left:541.00px;top:156.98px;font-size:7.04px;color:#333;font-weight:400;">Full Screen</div>
<div class="t" style="left:526.50px;top:175.42px;font-size:9.55px;color:#1e1e1e;font-weight:400;-webkit-text-stroke:0.45px #1e1e1e">Edit Inline Operator</div>
<div class="a" style="left:526.00px;top:193.00px;width:484.00px;height:1.00px;background:#eeeef1"></div>
<div class="a" style="left:526.20px;top:198.40px;width:56.30px;height:16.00px;border:1px solid #d9d9e0;border-radius:3px;background:#fff"></div>
<svg class="a" style="left:530.20px;top:200.40px;overflow:visible" width="12" height="12" viewBox="-6.0 -6.0 12 12"><circle cx="-3.4" cy="-2.25" r="0.95" fill="#9d68f5"/><circle cx="0" cy="-2.25" r="0.95" fill="#9d68f5" opacity=".95"/><path d="M-3.4 -2.25H0" stroke="#9d68f5" stroke-width="0.6" opacity=".9"/><circle cx="3.2" cy="-2.25" r="1.05" fill="#9d68f5" opacity=".85"/><circle cx="-3.4" cy="2.25" r="0.95" fill="#9d68f5"/><circle cx="0" cy="2.25" r="0.95" fill="#9d68f5" opacity=".95"/><path d="M-3.4 2.25H0" stroke="#9d68f5" stroke-width="0.6" opacity=".9"/><circle cx="3.2" cy="2.25" r="1.05" fill="#9d68f5" opacity=".85"/></svg>
<div class="t" style="left:543.00px;top:202.75px;font-size:7.3px;color:#9c62f4;font-weight:400;">map</div>
<svg class="a" style="left:569.5px;top:204.3px;overflow:visible" width="8" height="5" viewBox="0 0 8 5"><path d="M0.7 0.8L3.8 3.9L6.9 0.8" fill="none" stroke="#333" stroke-width="1.2"/></svg>
<div class="a" style="left:980.40px;top:198.50px;width:29.60px;height:15.50px;border:1px solid #d9d9e0;border-radius:3px;background:#fff"></div>
<div class="t" style="left:985.60px;top:203.10px;font-size:8.2px;color:#2a2a2a;font-weight:400;">Done</div>
<div class="a" style="left:526.00px;top:219.00px;width:484.00px;height:453.00px;background:#282c34"></div>
<div class="a" style="left:526.00px;top:219.00px;width:484.00px;height:14.50px;background:#2c313c"></div>
<div class="a" style="left:526.00px;top:219.00px;width:484.00px;height:1.30px;background:#22252c"></div>
<div class="code" style="left:534.83px;top:222.55px;font-size:9.8px;line-height:12.71px;letter-spacing:-0.410px;color:#7f8693">1</div>
<div class="code" style="left:552.3px;top:222.55px;font-size:9.8px;line-height:12.71px;letter-spacing:-0.410px"><span style="color:#c678dd">fn</span><span style="color:#abb2bf"> </span><span style="color:#61afef">generate_key</span><span style="color:#abb2bf">(trip: </span><span style="color:#e5c07b">Trip</span><span style="color:#abb2bf">) -&gt; </span><span style="color:#e5c07b">Result</span><span style="color:#abb2bf">&lt;</span><span style="color:#e5c07b">Trip</span><span style="color:#abb2bf">&gt; {</span></div>
<div class="code" style="left:534.83px;top:235.26px;font-size:9.8px;line-height:12.71px;letter-spacing:-0.410px;color:#7f8693">2</div>
<div class="code" style="left:552.3px;top:235.26px;font-size:9.8px;line-height:12.71px;letter-spacing:-0.410px"><span style="color:#abb2bf">  </span><span style="color:#c678dd">use</span><span style="color:#abb2bf"> </span><span style="color:#e5c07b">sha2</span><span style="color:#abb2bf">::{Sha256, Digest};</span></div>
<div class="code" style="left:534.83px;top:247.97px;font-size:9.8px;line-height:12.71px;letter-spacing:-0.410px;color:#7f8693">3</div>
<div class="code" style="left:552.3px;top:247.97px;font-size:9.8px;line-height:12.71px;letter-spacing:-0.410px"></div>
<div class="code" style="left:534.83px;top:260.68px;font-size:9.8px;line-height:12.71px;letter-spacing:-0.410px;color:#7f8693">4</div>
<div class="code" style="left:552.3px;top:260.68px;font-size:9.8px;line-height:12.71px;letter-spacing:-0.410px"><span style="color:#abb2bf">  </span><span style="color:#c678dd">let</span><span style="color:#abb2bf"> </span><span style="color:#e5c07b">mut</span><span style="color:#abb2bf"> t </span><span style="color:#56b6c2">=</span><span style="color:#abb2bf"> </span><span style="color:#e06c75">trip</span><span style="color:#abb2bf">.</span><span style="color:#e06c75">clone</span><span style="color:#abb2bf">();</span></div>
<div class="code" style="left:534.83px;top:273.38px;font-size:9.8px;line-height:12.71px;letter-spacing:-0.410px;color:#7f8693">5</div>
<div class="code" style="left:552.3px;top:273.38px;font-size:9.8px;line-height:12.71px;letter-spacing:-0.410px"><span style="color:#abb2bf">  </span><span style="color:#c678dd">let</span><span style="color:#abb2bf"> </span><span style="color:#e5c07b">mut</span><span style="color:#abb2bf"> hasher </span><span style="color:#56b6c2">=</span><span style="color:#abb2bf"> </span><span style="color:#e5c07b">Sha256</span><span style="color:#abb2bf">::</span><span style="color:#e06c75">new</span><span style="color:#abb2bf">();</span></div>
<div class="code" style="left:534.83px;top:286.09px;font-size:9.8px;line-height:12.71px;letter-spacing:-0.410px;color:#7f8693">6</div>
<div class="code" style="left:552.3px;top:286.09px;font-size:9.8px;line-height:12.71px;letter-spacing:-0.410px"></div>
<div class="code" style="left:534.83px;top:298.81px;font-size:9.8px;line-height:12.71px;letter-spacing:-0.410px;color:#7f8693">7</div>
<div class="code" style="left:552.3px;top:298.81px;font-size:9.8px;line-height:12.71px;letter-spacing:-0.410px"><span style="color:#abb2bf">  </span><span style="color:#e06c75">hasher</span><span style="color:#abb2bf">.</span><span style="color:#e06c75">update</span><span style="color:#abb2bf">(</span><span style="color:#e06c75">t</span><span style="color:#abb2bf">.</span><span style="color:#e06c75">pu_location_id</span><span style="color:#abb2bf">.</span><span style="color:#e06c75">to_string</span><span style="color:#abb2bf">().</span><span style="color:#e06c75">as_bytes</span><span style="color:#abb2bf">());</span></div>
<div class="code" style="left:534.83px;top:311.51px;font-size:9.8px;line-height:12.71px;letter-spacing:-0.410px;color:#7f8693">8</div>
<div class="code" style="left:552.3px;top:311.51px;font-size:9.8px;line-height:12.71px;letter-spacing:-0.410px"><span style="color:#abb2bf">  </span><span style="color:#e06c75">hasher</span><span style="color:#abb2bf">.</span><span style="color:#e06c75">update</span><span style="color:#abb2bf">(</span><span style="color:#e06c75">t</span><span style="color:#abb2bf">.</span><span style="color:#e06c75">do_location_id</span><span style="color:#abb2bf">.</span><span style="color:#e06c75">to_string</span><span style="color:#abb2bf">().</span><span style="color:#e06c75">as_bytes</span><span style="color:#abb2bf">());</span></div>
<div class="code" style="left:534.83px;top:324.22px;font-size:9.8px;line-height:12.71px;letter-spacing:-0.410px;color:#7f8693">9</div>
<div class="code" style="left:552.3px;top:324.22px;font-size:9.8px;line-height:12.71px;letter-spacing:-0.410px"><span style="color:#abb2bf">  </span><span style="color:#e06c75">hasher</span><span style="color:#abb2bf">.</span><span style="color:#e06c75">update</span><span style="color:#abb2bf">(</span><span style="color:#e06c75">t</span><span style="color:#abb2bf">.</span><span style="color:#e06c75">hvfhs_license_num</span><span style="color:#abb2bf">.</span><span style="color:#e06c75">as_bytes</span><span style="color:#abb2bf">());</span></div>
<div class="code" style="left:529.36px;top:336.94px;font-size:9.8px;line-height:12.71px;letter-spacing:-0.410px;color:#7f8693">10</div>
<div class="code" style="left:552.3px;top:336.94px;font-size:9.8px;line-height:12.71px;letter-spacing:-0.410px"></div>
<div class="code" style="left:529.36px;top:349.64px;font-size:9.8px;line-height:12.71px;letter-spacing:-0.410px;color:#7f8693">11</div>
<div class="code" style="left:552.3px;top:349.64px;font-size:9.8px;line-height:12.71px;letter-spacing:-0.410px"><span style="color:#abb2bf">  </span><span style="color:#c678dd">let</span><span style="color:#abb2bf"> hash </span><span style="color:#56b6c2">=</span><span style="color:#abb2bf"> </span><span style="color:#e06c75">format!</span><span style="color:#abb2bf">(&quot;</span><span style="color:#98c379">{:x}</span><span style="color:#abb2bf">&quot;, </span><span style="color:#e06c75">hasher</span><span style="color:#abb2bf">.</span><span style="color:#e06c75">finalize</span><span style="color:#abb2bf">());</span></div>
<div class="code" style="left:529.36px;top:362.35px;font-size:9.8px;line-height:12.71px;letter-spacing:-0.410px;color:#7f8693">12</div>
<div class="code" style="left:552.3px;top:362.35px;font-size:9.8px;line-height:12.71px;letter-spacing:-0.410px"><span style="color:#abb2bf">  </span><span style="color:#e06c75">t</span><span style="color:#abb2bf">.</span><span style="color:#e06c75">key</span><span style="color:#abb2bf"> </span><span style="color:#56b6c2">=</span><span style="color:#abb2bf"> </span><span style="color:#61afef">Some</span><span style="color:#abb2bf">(</span><span style="color:#e06c75">hash</span><span style="color:#abb2bf">[..</span><span style="color:#d19a66">16</span><span style="color:#abb2bf">].</span><span style="color:#e06c75">to_string</span><span style="color:#abb2bf">());</span></div>
<div class="code" style="left:529.36px;top:375.06px;font-size:9.8px;line-height:12.71px;letter-spacing:-0.410px;color:#7f8693">13</div>
<div class="code" style="left:552.3px;top:375.06px;font-size:9.8px;line-height:12.71px;letter-spacing:-0.410px"></div>
<div class="code" style="left:529.36px;top:387.78px;font-size:9.8px;line-height:12.71px;letter-spacing:-0.410px;color:#7f8693">14</div>
<div class="code" style="left:552.3px;top:387.78px;font-size:9.8px;line-height:12.71px;letter-spacing:-0.410px"><span style="color:#abb2bf">  </span><span style="color:#61afef">Ok</span><span style="color:#abb2bf">(</span><span style="color:#e06c75">t</span><span style="color:#abb2bf">)</span></div>
<div class="code" style="left:529.36px;top:400.48px;font-size:9.8px;line-height:12.71px;letter-spacing:-0.410px;color:#7f8693">15</div>
<div class="code" style="left:552.3px;top:400.48px;font-size:9.8px;line-height:12.71px;letter-spacing:-0.410px"><span style="color:#abb2bf">}</span></div>
<div class="code" style="left:529.36px;top:413.19px;font-size:9.8px;line-height:12.71px;letter-spacing:-0.410px;color:#7f8693">16</div>
<div class="code" style="left:552.3px;top:413.19px;font-size:9.8px;line-height:12.71px;letter-spacing:-0.410px"></div>
<svg class="a" style="left:542.5px;top:227.5px;overflow:visible" width="6" height="5" viewBox="0 0 6 5"><path d="M0.8 1L2.9 3.2L5 1" fill="none" stroke="#7f8693" stroke-width="0.9"/></svg>
</div>
</body></html>
